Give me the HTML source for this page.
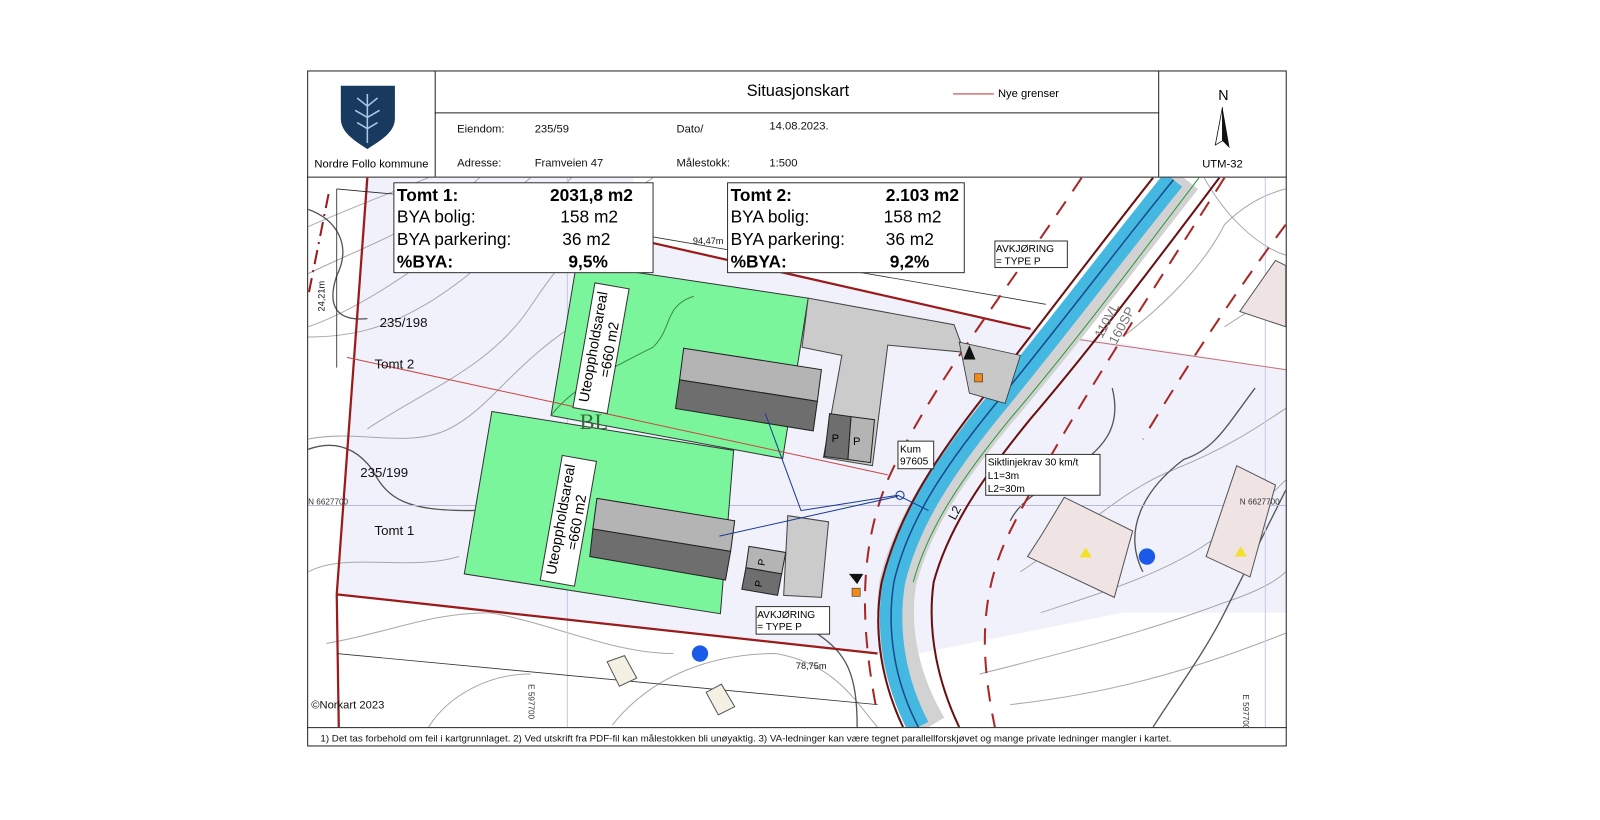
<!DOCTYPE html>
<html><head><meta charset="utf-8"><style>
html,body{margin:0;padding:0;background:#fff;}
svg{display:block;font-family:"Liberation Sans",Arial,sans-serif;}
</style></head><body>
<svg width="1600" height="820" viewBox="0 0 1568 803" preserveAspectRatio="none" xmlns="http://www.w3.org/2000/svg">
<rect width="1568" height="803" fill="#fff"/>
<defs><clipPath id="map"><rect x="302" y="174" width="958" height="538"/></clipPath></defs>
<g clip-path="url(#map)">
<rect x="302" y="174" width="958" height="538" fill="#fff"/>
<polygon points="358,174 620,174 640,238 1010,322 1260,362 1260,600 1100,600 900,640 860,640 330,582" fill="#f1f1fb"/>
<g fill="none" stroke="#a8a8a8" stroke-width="1">
<path d="M302,222 C340,205 380,190 420,174"/>
<path d="M302,268 C360,240 420,220 470,174"/>
<path d="M302,320 C360,300 430,250 520,174"/>
<path d="M302,330 C380,330 440,300 560,174"/>
<path d="M360,420 C420,380 480,360 520,300 C560,240 600,200 640,174"/>
<path d="M302,430 C350,420 400,440 440,420 C480,400 500,360 560,320"/>
<path d="M302,560 C340,540 400,560 450,545"/>
<path d="M320,630 C380,620 420,600 480,600 C540,610 600,640 660,640"/>
<path d="M600,710 C640,660 700,640 760,640 C820,650 840,690 860,712"/>
<path d="M420,712 C440,680 480,660 520,660"/>
<path d="M1000,560 C1060,520 1100,480 1150,460 C1200,440 1230,420 1260,400"/>
<path d="M1020,600 C1080,580 1150,560 1200,520 C1230,500 1250,480 1260,470"/>
<path d="M960,660 C1040,640 1120,620 1200,590 C1230,580 1250,570 1260,560"/>
<path d="M990,690 C1080,680 1160,660 1260,620"/>
<path d="M1180,174 C1200,210 1230,240 1260,250"/>
<path d="M1100,330 C1140,300 1180,260 1200,220 C1220,200 1240,190 1260,185"/>
<path d="M1200,320 C1230,300 1250,290 1260,280"/>
</g>
<g fill="none" stroke="#555" stroke-width="1.3">
<path d="M302,205 C330,215 345,240 330,270 C320,300 330,315 360,312"/>
<path d="M302,440 C330,430 350,440 365,460 C380,490 400,500 460,500 C500,500 520,490 560,470"/>
<path d="M1090,380 C1100,420 1080,440 1050,460 C1020,480 1000,490 990,510"/>
<path d="M1120,560 C1100,520 1120,480 1160,450 C1190,440 1200,420 1230,380"/>
<path d="M1260,480 C1240,520 1220,560 1200,600 C1180,640 1150,680 1130,712"/>
<path d="M800,620 C830,640 840,660 840,712"/>
</g>
<line x1="302" y1="495" x2="1260" y2="495" stroke="#b8b8d8" stroke-width="1"/>
<line x1="556" y1="174" x2="556" y2="712" stroke="#c8c8e8" stroke-width="1"/>
<line x1="1240" y1="174" x2="1240" y2="712" stroke="#c8c8e8" stroke-width="1"/>
<polygon points="565,258 792,292 767,449 540,407" fill="#7af59c" stroke="#333" stroke-width="1"/>
<polygon points="482,403 719,441 706,601 455,562" fill="#7af59c" stroke="#333" stroke-width="1"/>
<path d="M540,407 C560,380 600,360 640,340 C660,320 650,300 680,290" stroke="#3a8a4a" fill="none"/>
<polygon points="792,292 935,318 945,345 870,338 855,456 807,448 825,348 786,340" fill="#cbcbcb" stroke="#444" stroke-width="1"/>
<polygon points="772,505 812,511 805,585 768,583" fill="#cbcbcb" stroke="#444" stroke-width="1"/>
<polygon points="670,341 805,362 801,393 666,372" fill="#b4b4b4" stroke="#222"/>
<polygon points="666,372 801,393 797,422 662,400" fill="#6e6e6e" stroke="#222"/>
<polygon points="585,488 720,510 716,540 581,518" fill="#b4b4b4" stroke="#222"/>
<polygon points="581,518 716,540 711,568 578,545" fill="#6e6e6e" stroke="#222"/>
<polygon points="813,405 834,408 831,450 808,447" fill="#6e6e6e" stroke="#222"/>
<polygon points="834,408 857,411 853,453 831,450" fill="#b4b4b4" stroke="#222"/>
<text x="815" y="433" font-size="11">P</text><text x="836" y="436" font-size="11">P</text>
<polygon points="734,535 770,541 766,562 731,556" fill="#b4b4b4" stroke="#222"/>
<polygon points="731,556 766,562 762,583 727,577" fill="#6e6e6e" stroke="#222"/>
<text x="743" y="553" font-size="10" transform="rotate(-80 747 550)">P</text>
<text x="740" y="574" font-size="10" transform="rotate(-80 744 571)">P</text>
<g fill="none" stroke="#9b1b1b" stroke-width="2.2">
<path d="M360,174 L330,582 L332,712"/>
<path d="M330,582 L860,640"/>
<path d="M640,238 L1010,322"/>
<path d="M1040,330 L1260,362" stroke-width="1" stroke="#c07070"/>
</g>
<line x1="340" y1="350" x2="870" y2="465" stroke="#c44" stroke-width="1"/>
<line x1="330" y1="185" x2="330" y2="360" stroke="#222" stroke-width="0.8"/>
<path d="M330,185 L385,190" stroke="#222" stroke-width="0.8"/>
<path d="M640,232 L1025,298" stroke="#333" stroke-width="0.8"/>
<path d="M330,640 L860,690" stroke="#333" stroke-width="0.8"/>
<path d="M322,190 L302,290" stroke="#9b1b1b" stroke-width="2" stroke-dasharray="14 6 2 6"/>
<g fill="none" stroke="#a82828" stroke-width="2" stroke-dasharray="16 12">
<path d="M1060,174 C990,280 910,380 870,470 C845,530 840,600 860,700"/>
<path d="M1200,174 C1120,300 1040,420 990,520 C960,580 960,640 975,712"/>
<path d="M1260,220 C1200,300 1150,380 1120,430"/>
</g>
<g fill="none">
<path d="M1160,174 C1100,250 1040,330 980,400 C930,460 895,510 880,570 C872,620 885,670 910,712" stroke="#d2d2d2" stroke-width="36"/>
<path d="M1150,176 C1090,250 1030,330 972,400 C925,458 890,510 876,570 C868,620 878,670 900,712" stroke="#45b8e2" stroke-width="22"/>
<path d="M1150,176 C1090,250 1030,330 972,400 C925,458 890,510 876,570 C868,620 878,670 900,712" stroke="#1a4a8a" stroke-width="1.5"/>
<path d="M1175,174 C1110,260 1050,340 990,410 C945,465 910,515 895,570" stroke="#2a9a3a" stroke-width="1"/>
<path d="M1130,174 C1070,250 1010,330 955,400 C915,452 880,505 864,570 C855,620 865,670 885,712" stroke="#6b1010" stroke-width="2"/>
<path d="M1195,174 C1130,260 1070,340 1010,410 C965,465 930,515 915,570 C908,620 920,670 940,712" stroke="#6b1010" stroke-width="2"/>
</g>
<polygon points="940,335 1000,348 985,395 950,385" fill="#c8c8c8" stroke="#333" stroke-width="0.8"/>
<rect x="955" y="366" width="8" height="8" fill="#f08a1a" stroke="#333" stroke-width="0.6"/>
<rect x="835" y="576" width="8" height="8" fill="#f08a1a" stroke="#333" stroke-width="0.6"/>
<path d="M950,338 l6,14 l-12,0 z" fill="#111"/>
<path d="M840,572 l6,-10 l-14,0 z" fill="#111"/>
<path d="M750,405 L785,500 L880,485 L910,500" stroke="#1a3a9a" fill="none"/>
<path d="M705,525 L880,486" stroke="#1a3a9a" fill="none"/>
<circle cx="882" cy="485" r="4" fill="none" stroke="#1a3a9a"/>
<polygon points="1043,487 1110,520 1092,585 1007,545 1020,525" fill="#efe3e3" stroke="#555"/>
<polygon points="1212,456 1250,475 1225,565 1182,545" fill="#efe3e3" stroke="#555"/>
<polygon points="1250,255 1260,260 1260,320 1215,305" fill="#efe3e3" stroke="#555"/>
<polygon points="1064,536 1070,546 1058,546" fill="#f3e02a"/>
<polygon points="1216,535 1222,545 1210,545" fill="#f3e02a"/>
<circle cx="1124" cy="545" r="8" fill="#1a5ae8"/>
<circle cx="686" cy="640" r="8" fill="#1a5ae8"/>
<polygon points="595,648 612,642 624,664 607,672" fill="#f4f0e4" stroke="#555"/>
<polygon points="692,678 707,670 720,692 704,700" fill="#f4f0e4" stroke="#555"/>
<g font-size="13" fill="#111">
<text x="372" y="320">235/198</text>
<text x="367" y="361">Tomt 2</text>
<text x="353" y="467">235/199</text>
<text x="367" y="524">Tomt 1</text>
<text x="305" y="694" font-size="11">©Norkart 2023</text>
</g>
<text x="302" y="494" font-size="8" fill="#333">N 6627700</text>
<text x="1215" y="494" font-size="8" fill="#333">N 6627700</text>
<text x="780" y="655" font-size="9" fill="#111">78,75m</text>
<text x="679" y="239" font-size="9" fill="#111">94,47m</text>
<text x="318" y="305" font-size="9" fill="#111" transform="rotate(-90 318 305)">24,21m</text>
<text x="548" y="700" font-size="8" fill="#333" transform="rotate(90 548 670)">E 597700</text>
<text x="1238" y="700" font-size="8" fill="#333" transform="rotate(90 1238 680)">E 597700</text>
<text x="1080" y="332" font-size="13" fill="#777" transform="rotate(-62 1080 332)">110VL</text>
<text x="1094" y="338" font-size="13" fill="#777" transform="rotate(-62 1094 338)">160SP</text>
<text x="936" y="510" font-size="12" fill="#111" transform="rotate(-62 936 510)">L2</text>
<text x="568" y="420" font-size="22" fill="#3a6a3a" font-family="Liberation Serif">BL</text>
<g>
<rect x="-62" y="-17" width="124" height="34" fill="#fff" stroke="#333" transform="translate(589,341) rotate(-80)"/>
<text font-size="14" text-anchor="middle" transform="translate(589,341) rotate(-80)"><tspan x="0" y="-3">Uteoppholdsareal</tspan><tspan x="0" y="13">=660 m2</tspan></text>
<rect x="-62" y="-17" width="124" height="34" fill="#fff" stroke="#333" transform="translate(557,510) rotate(-80)"/>
<text font-size="14" text-anchor="middle" transform="translate(557,510) rotate(-80)"><tspan x="0" y="-3">Uteoppholdsareal</tspan><tspan x="0" y="13">=660 m2</tspan></text>
</g>
<rect x="386" y="179" width="254" height="88" fill="#fff" stroke="#333"/>
<g font-size="17" fill="#000">
<text x="389" y="197" font-weight="bold">Tomt 1:</text><text x="539" y="197" font-weight="bold">2031,8 m2</text>
<text x="389" y="218">BYA bolig:</text><text x="549" y="218">158 m2</text>
<text x="389" y="240">BYA parkering:</text><text x="551" y="240">36 m2</text>
<text x="389" y="262" font-weight="bold">%BYA:</text><text x="557" y="262" font-weight="bold">9,5%</text>
</g>
<rect x="713" y="179" width="232" height="88" fill="#fff" stroke="#333"/>
<g font-size="17" fill="#000">
<text x="716" y="197" font-weight="bold">Tomt 2:</text><text x="868" y="197" font-weight="bold">2.103 m2</text>
<text x="716" y="218">BYA bolig:</text><text x="866" y="218">158 m2</text>
<text x="716" y="240">BYA parkering:</text><text x="868" y="240">36 m2</text>
<text x="716" y="262" font-weight="bold">%BYA:</text><text x="872" y="262" font-weight="bold">9,2%</text>
</g>
<rect x="975" y="236" width="71" height="26" fill="#fff" stroke="#333"/>
<text x="976" y="247" font-size="10">AVKJØRING</text><text x="976" y="259" font-size="10">= TYPE P</text>
<rect x="741" y="594" width="72" height="27" fill="#fff" stroke="#333"/>
<text x="742" y="605" font-size="10">AVKJØRING</text><text x="742" y="617" font-size="10">= TYPE P</text>
<rect x="880" y="432" width="35" height="27" fill="#fff" stroke="#333"/>
<text x="882" y="443" font-size="10">Kum</text><text x="882" y="455" font-size="10">97605</text>
<rect x="966" y="445" width="112" height="40" fill="#fff" stroke="#333"/>
<text x="968" y="456" font-size="10">Siktlinjekrav 30 km/t</text><text x="968" y="469" font-size="10">L1=3m</text><text x="968" y="482" font-size="10">L2=30m</text>
</g>
<rect x="301.5" y="69.5" width="959" height="661" fill="none" stroke="#222" stroke-width="1"/>
<line x1="301" y1="173.5" x2="1261" y2="173.5" stroke="#222"/>
<line x1="301" y1="712.5" x2="1261" y2="712.5" stroke="#222"/>
<line x1="426.5" y1="69" x2="426.5" y2="173" stroke="#222"/>
<line x1="1135.5" y1="69" x2="1135.5" y2="173" stroke="#222"/>
<line x1="426" y1="110.5" x2="1136" y2="110.5" stroke="#222"/>
<path d="M334,84 L387,84 L387,116 C387,130 372,138 360,146 C348,138 334,130 334,116 Z" fill="#173a5e"/>
<g stroke="#a9c9e4" stroke-width="1.5" fill="none">
<path d="M360,140 L360,92"/><path d="M360,104 L350,96"/><path d="M360,104 L370,96"/><path d="M360,115 L348,108"/><path d="M360,115 L372,108"/><path d="M360,126 L350,120"/><path d="M360,126 L370,120"/>
</g>
<text x="364" y="164" font-size="11" text-anchor="middle">Nordre Follo kommune</text>
<text x="782" y="94" font-size="16" text-anchor="middle">Situasjonskart</text>
<line x1="934" y1="92" x2="974" y2="92" stroke="#c44" stroke-width="1"/>
<text x="978" y="95" font-size="11">Nye grenser</text>
<g font-size="11" fill="#111">
<text x="448" y="130">Eiendom:</text><text x="524" y="130">235/59</text><text x="663" y="130">Dato/</text><text x="754" y="127">14.08.2023.</text>
<text x="448" y="163">Adresse:</text><text x="524" y="163">Framveien 47</text><text x="663" y="163">Målestokk:</text><text x="754" y="163">1:500</text>
</g>
<text x="1199" y="98" font-size="14" text-anchor="middle">N</text>
<path d="M1198,105 L1191,142 L1198,138 Z" fill="#fff" stroke="#111" stroke-width="0.8"/>
<path d="M1198,105 L1205,145 L1198,138 Z" fill="#111"/>
<text x="1198" y="164" font-size="11" text-anchor="middle">UTM-32</text>
<text x="314" y="726" font-size="9" fill="#111" textLength="834" lengthAdjust="spacingAndGlyphs">1) Det tas forbehold om feil i kartgrunnlaget.   2) Ved utskrift fra PDF-fil kan målestokken bli unøyaktig.   3) VA-ledninger kan være tegnet parallellforskjøvet og mange private ledninger mangler i kartet.</text>
</svg>
</body></html>
